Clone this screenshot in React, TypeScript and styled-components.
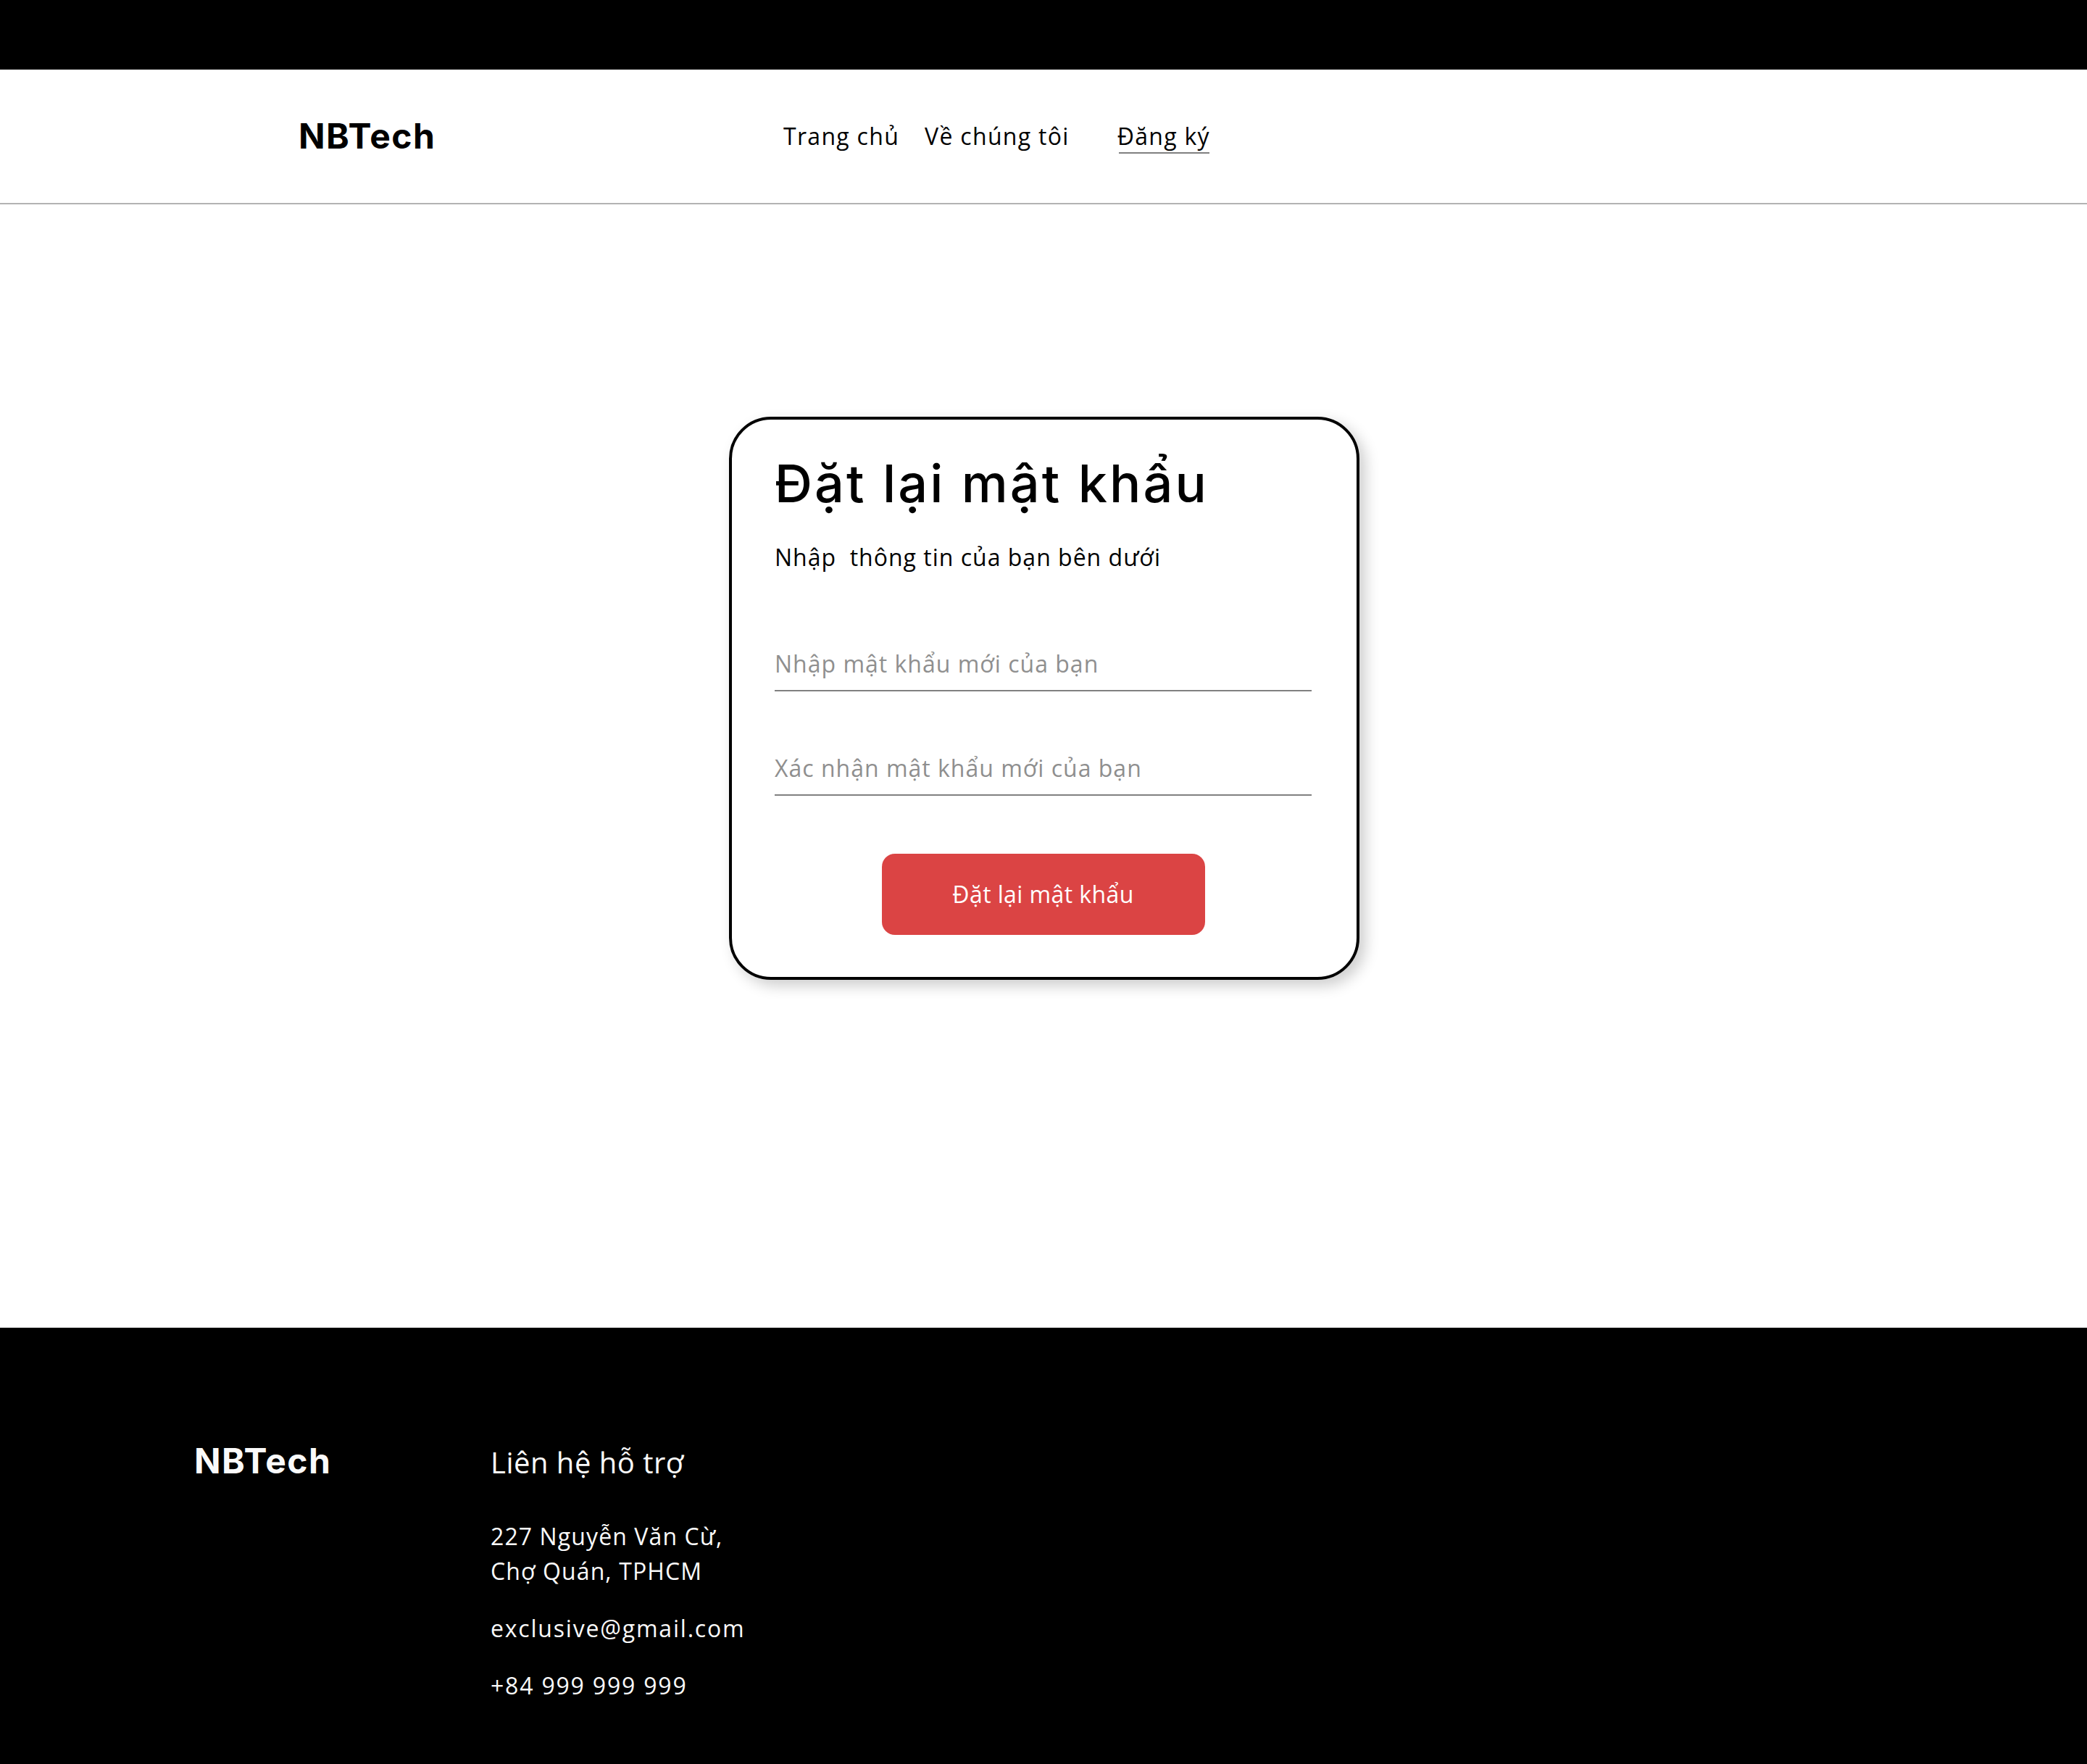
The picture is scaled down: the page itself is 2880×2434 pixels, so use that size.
import React from "react";
import styled, { createGlobalStyle } from "styled-components";

const GlobalStyle = createGlobalStyle`
  *, *::before, *::after { box-sizing: border-box; }
  html, body { margin: 0; padding: 0; background: #ffffff; }
  body {
    font-family: "Open Sans", "Noto Sans", sans-serif;
    color: #000000;
  }
`;

const Page = styled.div`
  width: 100%;
  min-height: 2434px;
  display: flex;
  flex-direction: column;
`;

const TopBar = styled.div`
  height: 96px;
  background: #000000;
`;

const Header = styled.header`
  height: 186px;
  display: flex;
  align-items: center;
  padding-left: 412px;
  border-bottom: 2px solid #b3b3b3;
`;

const Logo = styled.div<{ $width: number; $light?: boolean }>`
  width: ${(p) => p.$width}px;
  flex-shrink: 0;
  font-family: Inter, "Liberation Sans", sans-serif;
  font-weight: 700;
  font-size: 48px;
  line-height: 58px;
  letter-spacing: 1.44px;
  color: ${(p) => (p.$light ? "#fafafa" : "#000000")};
`;

const Nav = styled.nav`
  display: flex;
  align-items: center;
`;

const NavLink = styled.a<{ $offset: number; $active?: boolean }>`
  position: relative;
  display: block;
  margin-left: ${(p) => p.$offset}px;
  font-size: 32px;
  line-height: 48px;
  letter-spacing: 1.3px;
  color: #000000;
  text-decoration: none;
  white-space: nowrap;

  ${(p) =>
    p.$active &&
    `
    &::after {
      content: "";
      position: absolute;
      left: 2px;
      right: 1px;
      top: 46px;
      height: 2px;
      background: #808080;
    }
  `}
`;

const Main = styled.main`
  display: flex;
  justify-content: center;
  align-items: flex-start;
  padding: 293px 0 480px;
`;

const Card = styled.section`
  width: 870px;
  margin-left: 2px;
  display: flex;
  flex-direction: column;
  padding: 58px 62px 58px 59px;
  background: #ffffff;
  border: 4px solid #000000;
  border-radius: 58px;
  box-shadow: 8px 8px 20px rgba(0, 0, 0, 0.2);
`;

const Title = styled.h1`
  margin: 0;
  font-family: Inter, "Liberation Sans", sans-serif;
  font-weight: 500;
  font-size: 72px;
  line-height: 60px;
  letter-spacing: 3.1px;
  white-space: nowrap;
`;

const Subtitle = styled.p`
  margin: 48px 0 0;
  font-size: 32px;
  line-height: 48px;
  letter-spacing: 1px;
  white-space: pre;
`;

const Form = styled.form`
  display: flex;
  flex-direction: column;
  margin-top: 98px;
`;

const Field = styled.input`
  display: block;
  width: 100%;
  height: 63px;
  margin: 0;
  padding: 0 0 13px;
  border: none;
  border-bottom: 2px solid #808080;
  border-radius: 0;
  background: transparent;
  font-family: "Open Sans", "Noto Sans", sans-serif;
  font-size: 32px;
  line-height: 48px;
  letter-spacing: 1px;
  color: #000000;
  outline: none;

  &::placeholder {
    color: #8f8f8f;
    opacity: 1;
  }

  & + & {
    margin-top: 81px;
  }
`;

const SubmitButton = styled.button`
  align-self: center;
  margin-top: 80px;
  width: 446px;
  height: 112px;
  border: none;
  border-radius: 18px;
  background: #db4444;
  color: #ffffff;
  font-family: "Open Sans", "Noto Sans", sans-serif;
  font-weight: 500;
  font-size: 32px;
  line-height: 48px;
  letter-spacing: 0.4px;
  cursor: pointer;
`;

const Footer = styled.footer`
  flex: 1;
  min-height: 602px;
  display: flex;
  align-items: flex-start;
  padding: 155px 0 0 268px;
  background: #000000;
  color: #fafafa;
`;

const Contact = styled.div`
  display: flex;
  flex-direction: column;
  margin-top: 3px;
`;

const ContactTitle = styled.h3`
  margin: 0 0 50px;
  font-weight: 500;
  font-size: 40px;
  line-height: 56px;
  letter-spacing: 0.5px;
  white-space: nowrap;
`;

const ContactList = styled.div`
  display: flex;
  flex-direction: column;
  gap: 31px;
`;

const ContactItem = styled.p<{ $tracking: number }>`
  margin: 0;
  font-size: 32px;
  line-height: 48px;
  letter-spacing: ${(p) => p.$tracking}px;
  white-space: nowrap;
`;

export default function App() {
  return (
    <>
      <GlobalStyle />
      <Page>
        <TopBar />
        <Header>
          <Logo $width={669}>NBTech</Logo>
          <Nav>
            <NavLink href="#" $offset={0}>
              Trang chủ
            </NavLink>
            <NavLink href="#" $offset={35}>
              Về chúng tôi
            </NavLink>
            <NavLink href="#" $offset={66} $active>
              Đăng ký
            </NavLink>
          </Nav>
        </Header>
        <Main>
          <Card>
            <Title>Đặt lại mật khẩu</Title>
            <Subtitle>{"Nhập  thông tin của bạn bên dưới"}</Subtitle>
            <Form onSubmit={(e) => e.preventDefault()}>
              <Field type="password" placeholder="Nhập mật khẩu mới của bạn" />
              <Field type="password" placeholder="Xác nhận mật khẩu mới của bạn" />
              <SubmitButton type="submit">Đặt lại mật khẩu</SubmitButton>
            </Form>
          </Card>
        </Main>
        <Footer>
          <Logo $width={409} $light>
            NBTech
          </Logo>
          <Contact>
            <ContactTitle>Liên hệ hỗ trợ</ContactTitle>
            <ContactList>
              <ContactItem $tracking={1.1}>
                227 Nguyễn Văn Cừ,
                <br />
                Chợ Quán, TPHCM
              </ContactItem>
              <ContactItem $tracking={1.8}>exclusive@gmail.com</ContactItem>
              <ContactItem $tracking={1.8}>+84 999 999 999</ContactItem>
            </ContactList>
          </Contact>
        </Footer>
      </Page>
    </>
  );
}
